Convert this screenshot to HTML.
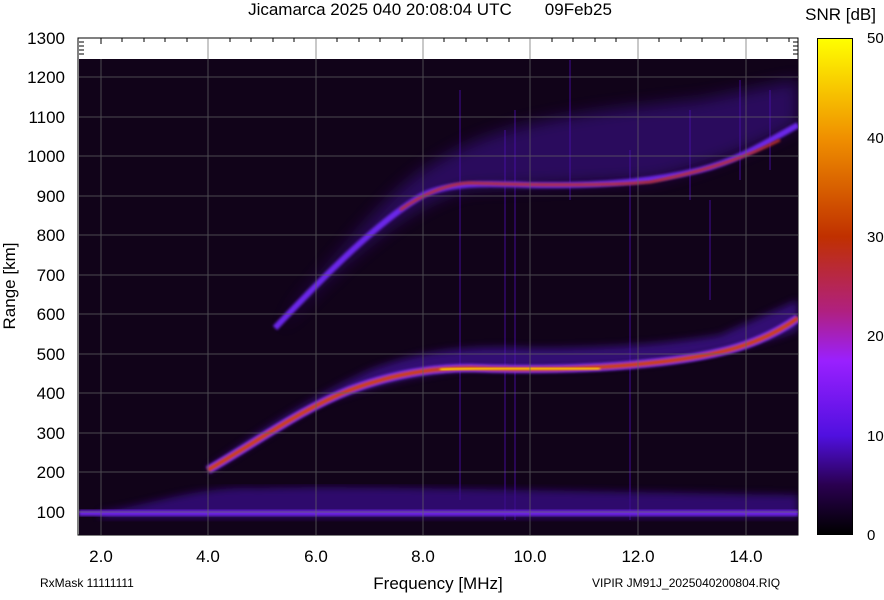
<!DOCTYPE html>
<html><head><style>
body{margin:0;background:#fff;width:884px;height:595px;overflow:hidden;font-family:"Liberation Sans",sans-serif}
</style></head><body>
<svg width="884" height="595" xmlns="http://www.w3.org/2000/svg" font-family="Liberation Sans, sans-serif">
<defs>
<linearGradient id="cb" x1="0" y1="1" x2="0" y2="0">
<stop offset="0" stop-color="#000"/>
<stop offset="0.1" stop-color="#2a0050"/>
<stop offset="0.2" stop-color="#5010e0"/>
<stop offset="0.35" stop-color="#9a20ff"/>
<stop offset="0.45" stop-color="#b02080"/>
<stop offset="0.6" stop-color="#c03000"/>
<stop offset="0.8" stop-color="#f09000"/>
<stop offset="1" stop-color="#ffff00"/>
</linearGradient>
<filter id="b4"><feGaussianBlur stdDeviation="4"/></filter>
<filter id="b8"><feGaussianBlur stdDeviation="8"/></filter>
<filter id="b2"><feGaussianBlur stdDeviation="1.2"/></filter>
<clipPath id="pc"><rect x="79" y="59" width="719" height="476"/></clipPath>
</defs>
<text x="430" y="15" font-size="17" text-anchor="middle">Jicamarca 2025 040 20:08:04 UTC &#160;&#160;&#160;&#160;&#160;&#160;09Feb25</text>
<rect x="78" y="38" width="720" height="497" fill="#fff" stroke="#000"/>
<rect x="79" y="59" width="719" height="476" fill="#0a0208"/>
<g clip-path="url(#pc)">
<rect x="79" y="59" width="719" height="476" fill="#200638" opacity="0.35"/>
<g stroke="#3a0a80" stroke-width="2" opacity="0.6">
<path d="M460,90V500M505,130V520M515,110V520M570,60V200M630,150V520M690,110V200M710,200V300M740,80V180M770,90V170"/>
</g>
<!-- upper haze -->
<path d="M300,300 C360,230 400,180 440,160 C500,120 600,110 700,100 L798,80 L798,125 C760,145 700,170 650,180 L470,188 C420,198 350,250 280,330Z" fill="#4a14b0" opacity="0.45" filter="url(#b8)"/>
<path d="M275,328 C330,270 380,220 423,195 C450,183 480,183 530,185 C600,186 650,182 700,170 C740,160 770,140 798,125" fill="none" stroke="#6a28e8" stroke-width="6" filter="url(#b2)"/>
<path d="M400,210 C420,196 445,184 470,183 C530,185 600,186 650,182 C700,172 740,160 780,140" fill="none" stroke="#c03020" stroke-width="2.5" filter="url(#b2)"/>
<!-- lower haze -->
<path d="M208,468 C260,430 316,395 370,370 C420,350 470,345 530,348 C600,348 660,345 720,335 L798,300 L798,330 C760,345 700,355 660,362 C600,368 530,370 470,368 C420,375 370,385 316,405 C260,440 230,460 208,472Z" fill="#4a14b0" opacity="0.6" filter="url(#b4)"/>
<path d="M208,470 C260,440 300,410 350,390 C390,375 430,368 470,368 C530,370 600,369 660,362 C720,355 760,345 798,318" fill="none" stroke="#8a30ff" stroke-width="8" filter="url(#b2)"/>
<path d="M208,470 C260,440 300,410 350,390 C390,375 430,368 470,368 C530,370 600,369 660,362 C720,355 760,345 798,318" fill="none" stroke="#d04010" stroke-width="4" filter="url(#b2)"/>
<path d="M440,370 C470,367 530,369 600,368" fill="none" stroke="#ffd000" stroke-width="3" filter="url(#b2)"/>
<!-- bottom band -->
<path d="M100,512 C150,505 200,485 260,488 C350,485 500,490 798,495 L798,518 L100,518Z" fill="#3a0c90" opacity="0.7" filter="url(#b4)"/>
<rect x="79" y="510" width="719" height="6" fill="#6a20e0" filter="url(#b2)"/>
<path d="M140,511 L500,511" stroke="#b02020" stroke-width="2.5" opacity="0.7" filter="url(#b2)"/>
</g>
<g stroke="#666" stroke-width="1" opacity="0.7">
<path d="M101,59V535M208,38V535M316,38V535M423,38V535M530,38V535M638,38V535M746,38V535"/>
<path d="M79,77H798M79,117H798M79,156H798M79,196H798M79,235H798M79,275H798M79,314H798M79,354H798M79,393H798M79,433H798M79,472H798M79,512H798"/>
</g>
<g stroke="#000" stroke-width="1">
<path d="M101,38v6M122,38v4M144,38v4M165,38v4M187,38v4M230,38v4M251,38v4M273,38v4M294,38v4M337,38v4M359,38v4M380,38v4M402,38v4M444,38v4M466,38v4M487,38v4M509,38v4M552,38v4M573,38v4M595,38v4M616,38v4M659,38v4M681,38v4M702,38v4M724,38v4M767,38v4M789,38v4"/>
<path d="M79,42h5M79,46h5M79,50h5M79,54h5M798,42h-5M798,46h-5M798,50h-5M798,54h-5"/>
</g>
<g font-size="17" text-anchor="end">
<text x="65" y="44">1300</text><text x="65" y="83">1200</text><text x="65" y="123">1100</text>
<text x="65" y="162">1000</text><text x="65" y="202">900</text><text x="65" y="241">800</text>
<text x="65" y="281">700</text><text x="65" y="320">600</text><text x="65" y="360">500</text>
<text x="65" y="399">400</text><text x="65" y="439">300</text><text x="65" y="478">200</text>
<text x="65" y="518">100</text>
</g>
<g font-size="17" text-anchor="middle">
<text x="101" y="562">2.0</text><text x="208" y="562">4.0</text><text x="316" y="562">6.0</text>
<text x="423" y="562">8.0</text><text x="530" y="562">10.0</text><text x="638" y="562">12.0</text>
<text x="746" y="562">14.0</text>
<text x="438" y="589">Frequency [MHz]</text>
</g>
<text transform="translate(15,286) rotate(-90)" font-size="17" text-anchor="middle">Range [km]</text>
<text x="40" y="587" font-size="12">RxMask 11111111</text>
<text x="592" y="587" font-size="12">VIPIR  JM91J_2025040200804.RIQ</text>
<text x="876" y="20" font-size="17" text-anchor="end">SNR [dB]</text>
<rect x="817.5" y="38.5" width="35" height="496" fill="url(#cb)" stroke="#000"/>
<g font-size="15">
<text x="867" y="43">50</text><text x="867" y="143">40</text><text x="867" y="242">30</text>
<text x="867" y="341">20</text><text x="867" y="441">10</text><text x="867" y="540">0</text>
</g>
</svg>
</body></html>
